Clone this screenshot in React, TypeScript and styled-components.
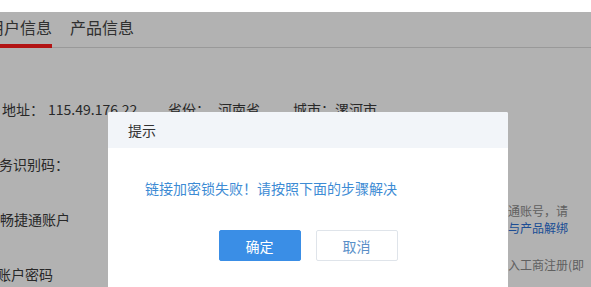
import React from "react";
import styled, { createGlobalStyle } from "styled-components";

const Global = createGlobalStyle`
  html, body { margin: 0; padding: 0; background: #fff; }
  body {
    font-family: "Noto Sans CJK SC", "Microsoft YaHei", "Noto Sans", sans-serif;
    color: #3a3a3a;
    width: 591px;
    height: 287px;
    overflow: hidden;
  }
`;

const Page = styled.div`
  position: relative;
  width: 591px;
  height: 287px;
  overflow: hidden;
  padding-top: 12px;
  box-sizing: border-box;
`;

const TabBar = styled.div`
  display: flex;
  align-items: flex-end;
  height: 36px;
  border-bottom: 1px solid #dcdcdc;
  box-sizing: border-box;
`;

const Tab = styled.div<{ $active?: boolean; $offset?: number }>`
  font-size: 16px;
  line-height: 20px;
  color: #454545;
  padding-bottom: 10px;
  margin-left: ${(p) => p.$offset ?? 0}px;
  margin-right: 18px;
  position: relative;
  &::after {
    content: "";
    display: ${(p) => (p.$active ? "block" : "none")};
    position: absolute;
    left: 0;
    right: 0;
    bottom: -1px;
    height: 4px;
    background: #ff1c1c;
  }
`;

const Form = styled.div`
  display: flex;
  flex-direction: column;
  gap: 35px;
  margin-top: 51px;
`;

const Row = styled.div`
  display: flex;
  align-items: center;
  height: 20px;
  font-size: 14px;
  line-height: 20px;
  white-space: nowrap;
  position: relative;
`;

const Label = styled.span<{ $offset?: number; $width?: number }>`
  margin-left: ${(p) => p.$offset ?? 0}px;
  width: ${(p) => (p.$width ? `${p.$width}px` : "auto")};
  flex-shrink: 0;
  color: #3a3a3a;
`;

const Value = styled.span<{ $width?: number }>`
  width: ${(p) => (p.$width ? `${p.$width}px` : "auto")};
  flex-shrink: 0;
  color: #3a3a3a;
`;

const Spacer = styled.div<{ $w: number }>`
  width: ${(p) => p.$w}px;
  flex-shrink: 0;
`;

const Hint = styled.div<{ $shift?: number }>`
  font-size: 12px;
  line-height: 17px;
  color: #8a8a8a;
  transform: translateY(${(p) => p.$shift ?? 0}px);
`;

const Link = styled.span`
  color: #2a6fd6;
`;

const Overlay = styled.div`
  position: absolute;
  left: 0;
  right: 0;
  top: 12px;
  bottom: 0;
  background: rgba(0, 0, 0, 0.3);
`;

const Dialog = styled.div`
  position: absolute;
  left: 108px;
  top: 112px;
  width: 400px;
  height: 220px;
  background: #fff;
  border-radius: 2px;
  overflow: hidden;
`;

const DialogHeader = styled.div`
  height: 36px;
  background: #f2f5f9;
  display: flex;
  align-items: center;
  padding-left: 20px;
  font-size: 14px;
  color: #333;
`;

const DialogBody = styled.div`
  padding: 30px 0 0 37px;
  font-size: 14px;
  line-height: 20px;
  color: #3d8bd4;
`;

const Actions = styled.div`
  display: flex;
  justify-content: center;
  gap: 15px;
  margin-top: 32px;
`;

const Button = styled.button<{ $primary?: boolean }>`
  width: 82px;
  height: 31px;
  box-sizing: border-box;
  font-family: inherit;
  font-size: 14px;
  border-radius: 2px;
  border: 1px solid ${(p) => (p.$primary ? "#3a8ee6" : "#dfe4ea")};
  background: ${(p) => (p.$primary ? "#3a8ee6" : "#fff")};
  color: ${(p) => (p.$primary ? "#fff" : "#5a8fc8")};
  padding: 0;
  cursor: pointer;
`;

export default function App() {
  return (
    <>
      <Global />
      <Page>
        <TabBar>
          <Tab $active $offset={-12}>用户信息</Tab>
          <Tab>产品信息</Tab>
        </TabBar>
        <Form>
          <Row>
            <Label $offset={2} $width={46}>地址：</Label>
            <Value $width={120}>115.49.176.22</Value>
            <Label $width={50}>省份：</Label>
            <Value $width={75}>河南省</Value>
            <Label $width={42}>城市：</Label>
            <Value>漯河市</Value>
          </Row>
          <Row>
            <Label $offset={-15}>业务识别码：</Label>
          </Row>
          <Row>
            <Label $width={484}>畅捷通账户</Label>
            <Hint $shift={0}>
              畅捷通账号，请
              <br />
              账号<Link>与产品解绑</Link>
            </Hint>
          </Row>
          <Row>
            <Label $offset={-3} $width={487}>账户密码</Label>
            <Hint $shift={-10}>请填入工商注册(即</Hint>
          </Row>
        </Form>
        <Overlay />
        <Dialog>
          <DialogHeader>提示</DialogHeader>
          <DialogBody>链接加密锁失败！请按照下面的步骤解决</DialogBody>
          <Actions>
            <Button $primary>确定</Button>
            <Button>取消</Button>
          </Actions>
        </Dialog>
      </Page>
    </>
  );
}
